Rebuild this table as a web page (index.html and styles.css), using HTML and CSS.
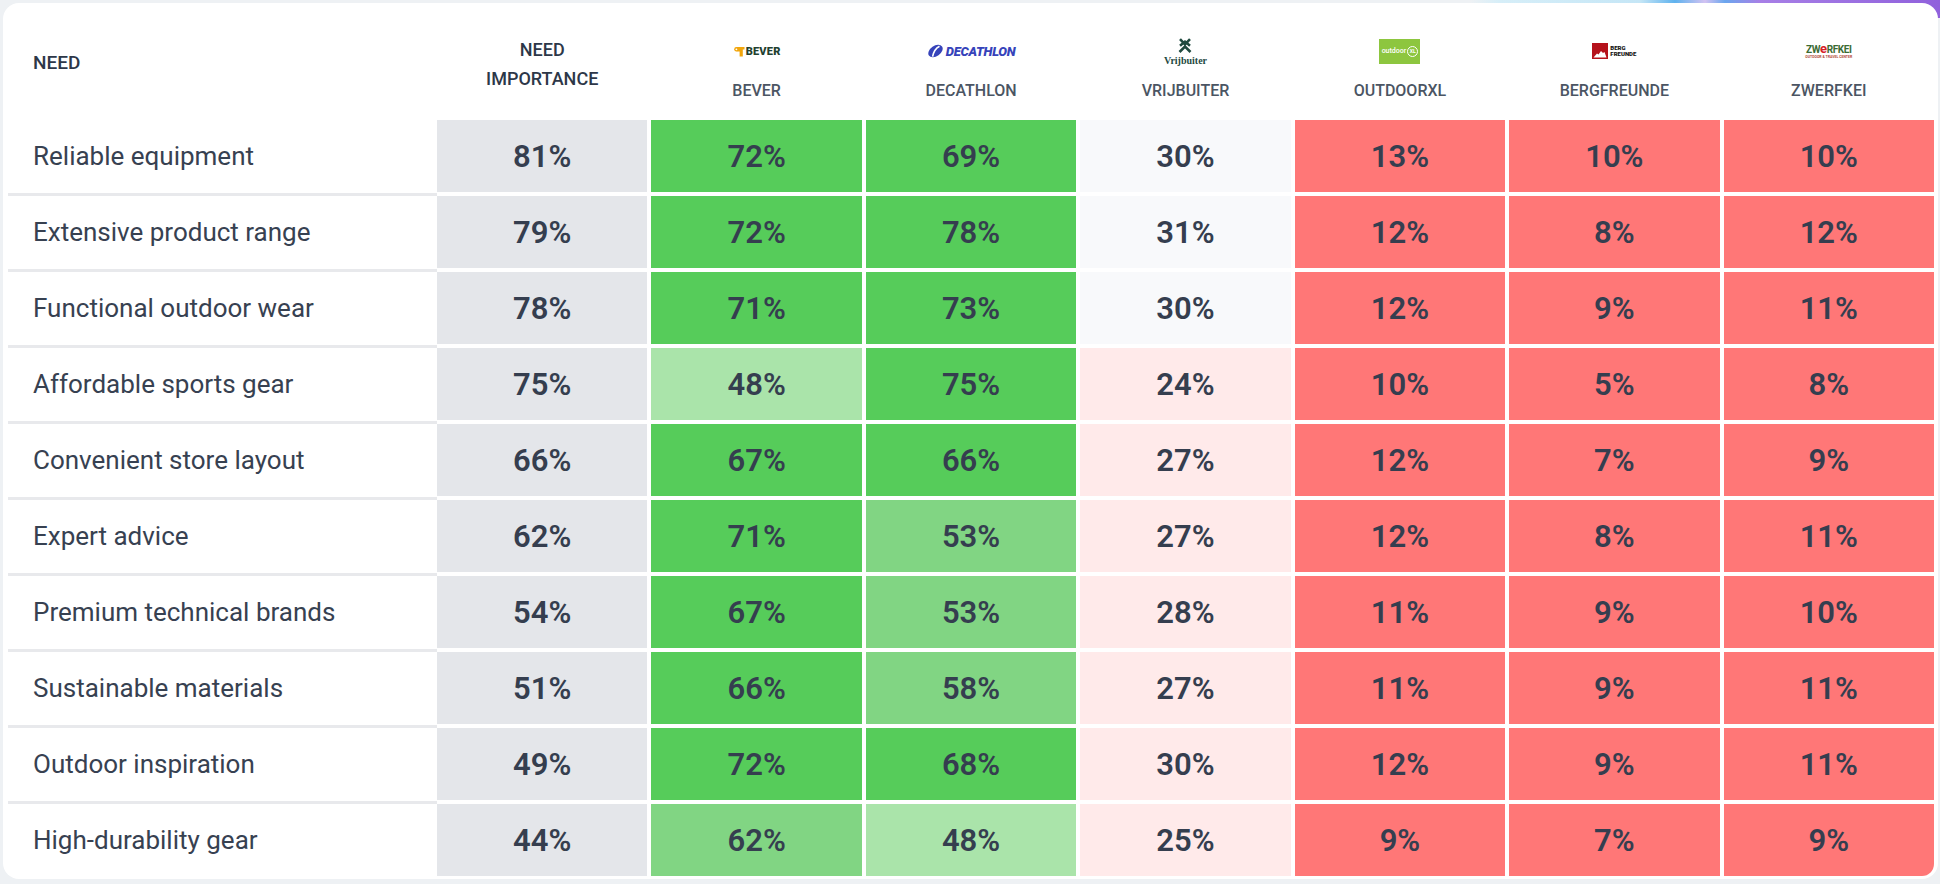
FILE: index.html
```html
<!DOCTYPE html>
<html lang="en">
<head>
<meta charset="utf-8">
<title>Need importance by retailer</title>
<link rel="stylesheet" href="styles.css">
</head>
<body>
<div class="card">
  <div class="grid head">
    <div class="h-need">NEED</div>
    <div class="h-imp">NEED<br>IMPORTANCE</div>
    <div class="brand">
      <div class="logo">
        <span class="bever-logo">
          <svg width="12" height="11" viewBox="0 0 12 11"><path d="M4.5 1h7v2.4H9.8V10.5H6.6V5.4H4.5A2.2 2.2 0 0 1 4.5 1z" fill="#f2a60c"/><circle cx="3.4" cy="3.3" r="2.2" fill="#f2a60c"/><circle cx="3.4" cy="3.3" r="0.9" fill="#fff"/></svg>
          <span class="bever-txt">BEVER</span>
        </span>
      </div>
      <div class="bname">BEVER</div>
    </div>
    <div class="brand">
      <div class="logo">
        <span class="deca-logo">
          <svg width="17" height="14" viewBox="0 0 17 14"><ellipse cx="8.5" cy="7" rx="8" ry="5.2" transform="rotate(-35 8.5 7)" fill="#3643ba"/><path d="M12.5 2.2C9 4 6.5 8 5.6 12.6" stroke="#fff" stroke-width="1.6" fill="none"/></svg>
          <span class="deca-txt">DECATHLON</span>
        </span>
      </div>
      <div class="bname">DECATHLON</div>
    </div>
    <div class="brand">
      <div class="logo">
        <span class="vrij-logo">
          <svg width="14" height="15" viewBox="0 0 14 15"><path d="M2 1.2L7 6.4L12 1.2M2 7.8L7 3.6L12 7.8" stroke="#1f4a3f" stroke-width="2.6" fill="none"/><path d="M1.5 14L7 8.6L12.5 14" stroke="#1f4a3f" stroke-width="2.6" fill="none"/></svg>
          <span class="vrij-txt">Vrijbuiter</span>
        </span>
      </div>
      <div class="bname">VRIJBUITER</div>
    </div>
    <div class="brand">
      <div class="logo">
        <span class="oxl-logo"><span class="oxl-t">outdoor</span><span class="oxl-xl">XL</span></span>
      </div>
      <div class="bname">OUTDOORXL</div>
    </div>
    <div class="brand">
      <div class="logo">
        <span class="berg-logo">
          <svg width="16" height="16" viewBox="0 0 16 16"><rect width="16" height="16" fill="#b5121b"/><path d="M1.5 14.5L5 10.5L6.5 11.5L9 8L11 10L12.5 9L14.5 14.5z" fill="#fff"/></svg>
          <span class="berg-txt">BERG<br>FREUNDE</span>
        </span>
      </div>
      <div class="bname">BERGFREUNDE</div>
    </div>
    <div class="brand">
      <div class="logo">
        <span class="zw-logo">
          <span class="zw-main">ZW<span class="zw-e">e</span>RFKEI</span>
          <span class="zw-sub">OUTDOOR &amp; TRAVEL CENTER</span>
        </span>
      </div>
      <div class="bname">ZWERFKEI</div>
    </div>
  </div>

  <div class="grid row">
    <div class="need">Reliable equipment</div>
    <div class="val imp">81%</div><div class="val strong">72%</div><div class="val strong">69%</div><div class="val neutral">30%</div><div class="val red">13%</div><div class="val red">10%</div><div class="val red">10%</div>
  </div>
  <div class="grid row">
    <div class="need">Extensive product range</div>
    <div class="val imp">79%</div><div class="val strong">72%</div><div class="val strong">78%</div><div class="val neutral">31%</div><div class="val red">12%</div><div class="val red">8%</div><div class="val red">12%</div>
  </div>
  <div class="grid row">
    <div class="need">Functional outdoor wear</div>
    <div class="val imp">78%</div><div class="val strong">71%</div><div class="val strong">73%</div><div class="val neutral">30%</div><div class="val red">12%</div><div class="val red">9%</div><div class="val red">11%</div>
  </div>
  <div class="grid row">
    <div class="need">Affordable sports gear</div>
    <div class="val imp">75%</div><div class="val light">48%</div><div class="val strong">75%</div><div class="val pink">24%</div><div class="val red">10%</div><div class="val red">5%</div><div class="val red">8%</div>
  </div>
  <div class="grid row">
    <div class="need">Convenient store layout</div>
    <div class="val imp">66%</div><div class="val strong">67%</div><div class="val strong">66%</div><div class="val pink">27%</div><div class="val red">12%</div><div class="val red">7%</div><div class="val red">9%</div>
  </div>
  <div class="grid row">
    <div class="need">Expert advice</div>
    <div class="val imp">62%</div><div class="val strong">71%</div><div class="val mid">53%</div><div class="val pink">27%</div><div class="val red">12%</div><div class="val red">8%</div><div class="val red">11%</div>
  </div>
  <div class="grid row">
    <div class="need">Premium technical brands</div>
    <div class="val imp">54%</div><div class="val strong">67%</div><div class="val mid">53%</div><div class="val pink">28%</div><div class="val red">11%</div><div class="val red">9%</div><div class="val red">10%</div>
  </div>
  <div class="grid row">
    <div class="need">Sustainable materials</div>
    <div class="val imp">51%</div><div class="val strong">66%</div><div class="val mid">58%</div><div class="val pink">27%</div><div class="val red">11%</div><div class="val red">9%</div><div class="val red">11%</div>
  </div>
  <div class="grid row">
    <div class="need">Outdoor inspiration</div>
    <div class="val imp">49%</div><div class="val strong">72%</div><div class="val strong">68%</div><div class="val pink">30%</div><div class="val red">12%</div><div class="val red">9%</div><div class="val red">11%</div>
  </div>
  <div class="grid row last">
    <div class="need">High-durability gear</div>
    <div class="val imp">44%</div><div class="val mid">62%</div><div class="val light">48%</div><div class="val pink">25%</div><div class="val red">9%</div><div class="val red">7%</div><div class="val red corner">9%</div>
  </div>
</div>
</body>
</html>
```

FILE: styles.css
```css
html, body {
  height: 100%;
}
body {
  margin: 0;
  padding: 3px 2px 5px 3px;
  box-sizing: border-box;
  background-color: #eef1f4;
  background-image: linear-gradient(to right,
    rgba(238,241,244,0) 1470px,
    #d6eef8 1500px,
    #c5e6f6 1640px,
    #5fb2ee 1675px,
    #d2c2f2 1705px,
    #6aa6ee 1725px,
    #a77fe6 1760px,
    #9061dc 1940px);
  background-size: 100% 18px;
  background-repeat: no-repeat;
  font-family: Roboto, "Liberation Sans", sans-serif;
  color: #374151;
}

.card {
  background: #fff;
  border-radius: 16px;
  padding: 0 4px 3px 5px;
  height: 876px;
  box-sizing: border-box;
}

.grid {
  display: grid;
  grid-template-columns: 425px repeat(7, minmax(0, 1fr));
  column-gap: 4px;
}

/* header */
.head {
  height: 117px;
  align-items: center;
}
.h-need {
  padding-left: 25px;
  font-size: 19px;
  font-weight: 500;
  color: #2d3748;
  padding-top: 2px;
}
.h-imp {
  text-align: center;
  font-size: 18px;
  font-weight: 500;
  line-height: 29px;
  color: #2d3748;
  padding-top: 4px;
}
.brand {
  align-self: start;
  padding-top: 28px;
  display: flex;
  flex-direction: column;
  align-items: center;
}
.logo {
  height: 40px;
  display: flex;
  align-items: center;
  justify-content: center;
}
.bname {
  margin-top: 8px;
  line-height: 24px;
  font-size: 16px;
  font-weight: 500;
  color: #4b5563;
}

/* logos */
.bever-logo {
  display: flex;
  align-items: center;
  gap: 1px;
}
.bever-txt {
  font-size: 11px;
  font-weight: 900;
  color: #22402f;
  letter-spacing: 0.2px;
}
.deca-logo {
  display: flex;
  align-items: center;
  gap: 2px;
}
.deca-txt {
  font-size: 13px;
  font-weight: 900;
  font-style: italic;
  color: #3643ba;
  letter-spacing: -0.3px;
}
.vrij-logo {
  display: flex;
  flex-direction: column;
  align-items: center;
  gap: 2px;
  margin-top: 2px;
}
.vrij-txt {
  font-family: "Liberation Serif", "DejaVu Serif", serif;
  font-weight: 700;
  font-size: 10px;
  color: #1f4a3f;
  line-height: 11px;
}
.oxl-logo {
  width: 41px;
  height: 25px;
  background: #8dc63f;
  display: flex;
  align-items: center;
  justify-content: center;
  gap: 1px;
}
.oxl-t {
  font-size: 7px;
  color: #fff;
  font-weight: 500;
}
.oxl-xl {
  font-size: 5px;
  color: #fff;
  font-weight: 700;
  border: 1px solid #fff;
  border-radius: 50%;
  width: 9px;
  height: 9px;
  display: flex;
  align-items: center;
  justify-content: center;
}
.berg-logo {
  display: flex;
  align-items: center;
  gap: 2px;
}
.berg-txt {
  font-size: 6px;
  line-height: 6px;
  font-weight: 900;
  color: #111;
}
.zw-logo {
  display: flex;
  flex-direction: column;
  align-items: center;
}
.zw-main {
  font-size: 10px;
  line-height: 11px;
  font-weight: 700;
  color: #3b6b34;
  letter-spacing: -0.4px;
  white-space: nowrap;
}
.zw-e {
  color: #d62027;
  font-size: 13px;
}
.zw-sub {
  font-size: 3.5px;
  line-height: 4px;
  white-space: nowrap;
  color: #b04a3a;
  font-weight: 700;
}

/* rows */
.need {
  height: 76px;
  box-sizing: border-box;
  border-bottom: 3px solid #e8e9ec;
  margin-right: -4px;
  padding-left: 25px;
  display: flex;
  align-items: center;
  padding-bottom: 1px;
  font-size: 26px;
  color: #374151;
}
.val {
  height: 72px;
  margin-bottom: 4px;
  display: flex;
  align-items: center;
  justify-content: center;
  font-size: 31px;
  font-weight: 600;
  color: #353e4f;
}
.last .need {
  height: 72px;
  border-bottom: 0;
  padding-bottom: 0;
}
.last .val {
  margin-bottom: 0;
}

.imp { background: #e4e6ea; }
.strong { background: #56cc5a; }
.mid { background: #81d583; }
.light { background: #aae4aa; }
.neutral { background: #f8f9fb; }
.pink { background: #ffeaea; }
.red { background: #ff7777; }
.corner { border-bottom-right-radius: 12px; }
```
